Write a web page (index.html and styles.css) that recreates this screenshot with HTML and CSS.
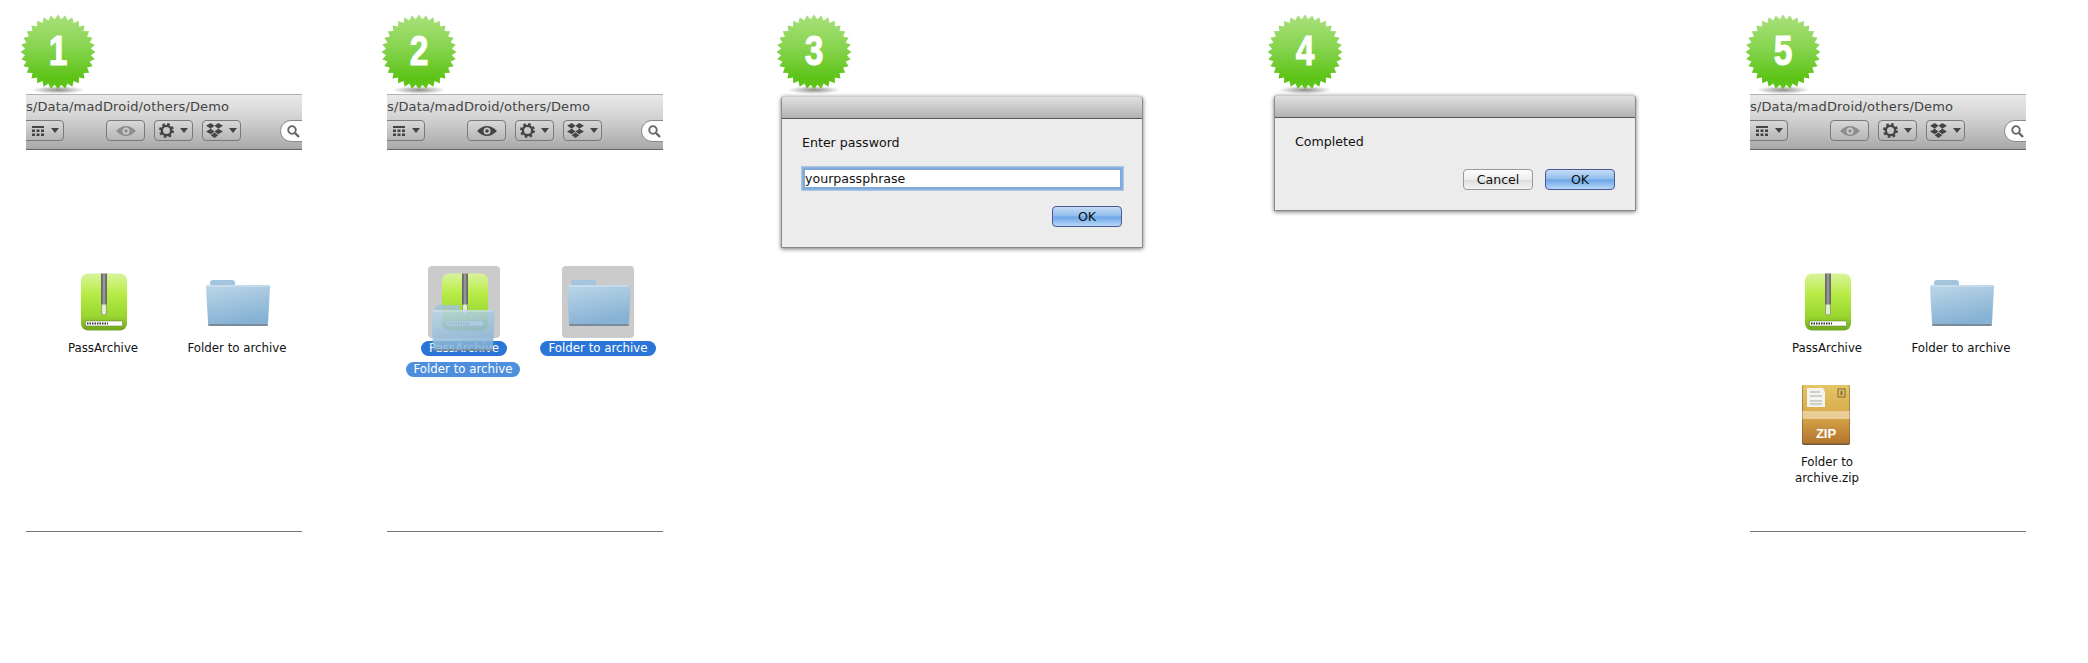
FILE: index.html
```html
<!DOCTYPE html>
<html>
<head>
<meta charset="utf-8"/>
    <title>PassArchive steps</title>
    <link rel="stylesheet" href="styles.css">
</head>
<body>
    <!-- shared icons -->
    <svg class="sprite" xmlns="http://www.w3.org/2000/svg">
        <defs>
            <linearGradient id="badgeFill" gradientUnits="userSpaceOnUse" x1="0" y1="0" x2="0" y2="76">
                <stop offset="0" stop-color="#a9e07c"/>
                <stop offset="0.45" stop-color="#86d44e"/>
                <stop offset="0.85" stop-color="#5cc315"/>
                <stop offset="1" stop-color="#62c51d"/>
            </linearGradient>
            <radialGradient id="badgeShadow">
                <stop offset="0" stop-color="#000" stop-opacity="0.45"/>
                <stop offset="1" stop-color="#000" stop-opacity="0"/>
            </radialGradient>
            <clipPath id="starClip">
                <circle cx="38" cy="38" r="33"/>
                <path d="M38 0.500L64 38L38 75.500L12 38z"/>
                <path d="M38 0.500L64 38L38 75.500L12 38z" transform="rotate(11.25 38 38)"/>
                <path d="M38 0.500L64 38L38 75.500L12 38z" transform="rotate(22.5 38 38)"/>
                <path d="M38 0.500L64 38L38 75.500L12 38z" transform="rotate(33.75 38 38)"/>
                <path d="M38 0.500L64 38L38 75.500L12 38z" transform="rotate(45 38 38)"/>
                <path d="M38 0.500L64 38L38 75.500L12 38z" transform="rotate(56.25 38 38)"/>
                <path d="M38 0.500L64 38L38 75.500L12 38z" transform="rotate(67.5 38 38)"/>
                <path d="M38 0.500L64 38L38 75.500L12 38z" transform="rotate(78.75 38 38)"/>
                <path d="M38 0.500L64 38L38 75.500L12 38z" transform="rotate(90 38 38)"/>
                <path d="M38 0.500L64 38L38 75.500L12 38z" transform="rotate(101.25 38 38)"/>
                <path d="M38 0.500L64 38L38 75.500L12 38z" transform="rotate(112.5 38 38)"/>
                <path d="M38 0.500L64 38L38 75.500L12 38z" transform="rotate(123.75 38 38)"/>
                <path d="M38 0.500L64 38L38 75.500L12 38z" transform="rotate(135 38 38)"/>
                <path d="M38 0.500L64 38L38 75.500L12 38z" transform="rotate(146.25 38 38)"/>
                <path d="M38 0.500L64 38L38 75.500L12 38z" transform="rotate(157.5 38 38)"/>
                <path d="M38 0.500L64 38L38 75.500L12 38z" transform="rotate(168.75 38 38)"/>
            </clipPath>
            <linearGradient id="zipGreen" x1="0" y1="0" x2="0" y2="1">
                <stop offset="0" stop-color="#d9f39b"/>
                <stop offset="0.35" stop-color="#b8ec47"/>
                <stop offset="0.75" stop-color="#9ad62f"/>
                <stop offset="1" stop-color="#6ea51f"/>
            </linearGradient>
            <linearGradient id="folderBody" x1="0" y1="0" x2="0.3" y2="1">
                <stop offset="0" stop-color="#bdd6e8"/>
                <stop offset="1" stop-color="#86b2d4"/>
            </linearGradient>
            <linearGradient id="boxFill" x1="0" y1="0" x2="0" y2="1">
                <stop offset="0" stop-color="#e4c666"/>
                <stop offset="0.5" stop-color="#d9a94a"/>
                <stop offset="1" stop-color="#b4752f"/>
            </linearGradient>
            <symbol id="badge" viewBox="0 0 76 82">
                <ellipse cx="38" cy="76" rx="27" ry="4" fill="url(#badgeShadow)"/>
                <rect x="0" y="0" width="76" height="76" fill="url(#badgeFill)" clip-path="url(#starClip)"/>
            </symbol>
            <symbol id="zipApp" viewBox="0 0 46 58">
                <rect x="0" y="0.500" width="46" height="57" rx="7" fill="url(#zipGreen)"/>
                <rect x="20" y="0.500" width="6" height="31" fill="#6a6a6e"/>
                <path d="M23 0.500V31" stroke="#c2c2c2" stroke-width="2.500" stroke-dasharray="1 1"/>
                <rect x="20.500" y="31" width="5" height="11" rx="2" fill="#e2ecd4" stroke="#7d8a6c" stroke-width="0.7"/>
                <rect x="4.500" y="48" width="37" height="5" fill="#fff" stroke="#5d7a2d" stroke-width="0.5"/>
                <path d="M6 50.500H27" stroke="#333" stroke-width="2" stroke-dasharray="1.500 1"/>
            </symbol>
            <symbol id="folder" viewBox="0 0 64 50">
                <path d="M4 6q0-3 3-3h19q3 0 3 3v2h30q3 0 3 3v4H4z" fill="#a2c4dc"/>
                <path d="M0 10q0-2 2-2h60q2 0 2 2l-2 36q0 2-2 2H4q-2 0-2-2z" fill="url(#folderBody)"/>
                <path d="M2 9h60" stroke="#d6e6f1" stroke-width="1"/>
                <path d="M2 47h60v1q0 1-2 1H4q-2 0-2-1z" fill="#7c8b97"/>
            </symbol>
            <symbol id="zipBox" viewBox="0 0 48 60">
                <rect x="0" y="0" width="48" height="60" rx="2" fill="#6b5a3a"/>
                <rect x="0.500" y="0" width="47" height="58.500" rx="2" fill="url(#boxFill)"/>
                <path d="M5 3h16l2 4v15H5z" fill="#f4f3ee"/>
                <path d="M8 7h10M8 11h12M8 16h12M8 19h12" stroke="#aaa" stroke-width="1"/>
                <rect x="36" y="4" width="7" height="8" fill="none" stroke="#7d6a3a"/>
                <rect x="38.500" y="6" width="2" height="4" fill="#7d6a3a"/>
                <rect x="0.500" y="26" width="47" height="8" fill="#f0d9b0" opacity="0.75"/>
                <text x="24" y="53" text-anchor="middle" class="zip-text">ZIP</text>
            </symbol>
            <symbol id="eye" viewBox="0 0 20 12">
                <path d="M0 6Q10-4 20 6Q10 16 0 6z" fill="currentColor"/>
                <circle cx="10" cy="6" r="3.500" fill="#ccc"/>
                <circle cx="10" cy="6" r="1.800" fill="currentColor"/>
            </symbol>
            <symbol id="gear" viewBox="0 0 16 16">
                <circle cx="8" cy="8" r="5" fill="none" stroke="#444" stroke-width="2.500"/>
                <circle cx="8" cy="8" r="6.500" fill="none" stroke="#444" stroke-width="3" stroke-dasharray="2.550 2.550"/>
            </symbol>
            <symbol id="dropbox" viewBox="0 0 18 16">
                <path d="M5 0l4 3-4 3-5-3zM13 0l5 3-5 3-4-3zM5 6l4 3-4 3-5-3zM13 6l5 3-5 3-4-3zM9 10l4 3-4 3-4-3z" fill="#444"/>
            </symbol>
            <symbol id="viewGrid" viewBox="0 0 12 10">
                <path d="M0 0h12v2H0zM0 3.500h3v2.500H0zM4.500 3.500h3v2.500h-3zM9 3.500h3v2.500H9zM0 7.500h3V10H0zM4.500 7.500h3V10h-3zM9 7.500h3V10H9z" fill="#444"/>
            </symbol>
            <symbol id="lens" viewBox="0 0 13 13">
                <circle cx="5" cy="5" r="3.800" fill="none" stroke="#666" stroke-width="1.800"/>
                <path d="M8 8l4 4" stroke="#666" stroke-width="2.400"/>
            </symbol>
        </defs>
    </svg>

    <div class="steps">
        <section class="step step-1">
            <div class="badge"><svg class="badge-star"><use href="#badge"/></svg><span class="digit">1</span></div>
            <div class="finder">
                <div class="toolbar">
                    <div class="path">s/Data/madDroid/others/Demo</div>
                    <div class="tools">
                        <div class="tool tool-view"><svg class="ico-grid"><use href="#viewGrid"/></svg><i class="caret"></i></div>
                        <div class="tool tool-eye eye-off"><svg class="ico-eye"><use href="#eye"/></svg></div>
                        <div class="tool"><svg class="ico-gear"><use href="#gear"/></svg><i class="caret"></i></div>
                        <div class="tool"><svg class="ico-drop"><use href="#dropbox"/></svg><i class="caret"></i></div>
                        <div class="search"><svg class="ico-lens"><use href="#lens"/></svg></div>
                    </div>
                </div>
                <div class="files">
                    <div class="file"><div class="thumb"><svg class="ico-zip"><use href="#zipApp"/></svg></div><div class="name"><span>PassArchive</span></div></div>
                    <div class="file"><div class="thumb"><svg class="ico-folder"><use href="#folder"/></svg></div><div class="name"><span>Folder to archive</span></div></div>
                </div>
            </div>
        </section>

        <section class="step step-2">
            <div class="badge"><svg class="badge-star"><use href="#badge"/></svg><span class="digit">2</span></div>
            <div class="finder">
                <div class="toolbar">
                    <div class="path">s/Data/madDroid/others/Demo</div>
                    <div class="tools">
                        <div class="tool tool-view"><svg class="ico-grid"><use href="#viewGrid"/></svg><i class="caret"></i></div>
                        <div class="tool tool-eye"><svg class="ico-eye"><use href="#eye"/></svg></div>
                        <div class="tool"><svg class="ico-gear"><use href="#gear"/></svg><i class="caret"></i></div>
                        <div class="tool"><svg class="ico-drop"><use href="#dropbox"/></svg><i class="caret"></i></div>
                        <div class="search"><svg class="ico-lens"><use href="#lens"/></svg></div>
                    </div>
                </div>
                <div class="files">
                    <div class="file selected"><div class="thumb"><svg class="ico-zip"><use href="#zipApp"/></svg></div><div class="name"><span>PassArchive</span></div></div>
                    <div class="file selected"><div class="thumb"><svg class="ico-folder"><use href="#folder"/></svg></div><div class="name"><span>Folder to archive</span></div></div>
                    <!-- item being dragged, sits over the first file -->
                    <div class="ghost">
                        <svg class="ico-folder"><use href="#folder"/></svg>
                        <div class="ghost-name">Folder to archive</div>
                    </div>
                </div>
            </div>
        </section>

        <section class="step step-3">
            <div class="badge"><svg class="badge-star"><use href="#badge"/></svg><span class="digit">3</span></div>
            <div class="dialog">
                <div class="dialog-title"></div>
                <div class="dialog-body">
                    <label class="dialog-label" for="pass">Enter password</label>
                    <input class="dialog-input" type="text" id="pass" value="yourpassphrase">
                    <div class="dialog-buttons">
                        <button type="button" class="btn btn-ok">OK</button>
                    </div>
                </div>
            </div>
        </section>

        <section class="step step-4">
            <div class="badge"><svg class="badge-star"><use href="#badge"/></svg><span class="digit">4</span></div>
            <div class="dialog">
                <div class="dialog-title"></div>
                <div class="dialog-body">
                    <div class="dialog-label">Completed</div>
                    <div class="dialog-buttons">
                        <button type="button" class="btn">Cancel</button>
                        <button type="button" class="btn btn-ok">OK</button>
                    </div>
                </div>
            </div>
        </section>

        <section class="step step-5">
            <div class="badge"><svg class="badge-star"><use href="#badge"/></svg><span class="digit">5</span></div>
            <div class="finder">
                <div class="toolbar">
                    <div class="path">s/Data/madDroid/others/Demo</div>
                    <div class="tools">
                        <div class="tool tool-view"><svg class="ico-grid"><use href="#viewGrid"/></svg><i class="caret"></i></div>
                        <div class="tool tool-eye eye-off"><svg class="ico-eye"><use href="#eye"/></svg></div>
                        <div class="tool"><svg class="ico-gear"><use href="#gear"/></svg><i class="caret"></i></div>
                        <div class="tool"><svg class="ico-drop"><use href="#dropbox"/></svg><i class="caret"></i></div>
                        <div class="search"><svg class="ico-lens"><use href="#lens"/></svg></div>
                    </div>
                </div>
                <div class="files">
                    <div class="file"><div class="thumb"><svg class="ico-zip"><use href="#zipApp"/></svg></div><div class="name"><span>PassArchive</span></div></div>
                    <div class="file"><div class="thumb"><svg class="ico-folder"><use href="#folder"/></svg></div><div class="name"><span>Folder to archive</span></div></div>
                    <div class="file"><div class="thumb"><svg class="ico-box"><use href="#zipBox"/></svg></div><div class="name name-wrap"><span>Folder to archive.zip</span></div></div>
                </div>
            </div>
        </section>
    </div>
</body>
</html>
```

FILE: styles.css
```css
body {
    font-family: "DejaVu Sans", "Open Sans", sans-serif;
    background-color: #fff;
    color: #111;
    margin: 0;
}
.sprite {
    position: absolute;
    width: 0;
    height: 0;
}
.steps {
    display: grid;
    grid-template-columns: 361px 395px 491px 477px 1fr;
    padding: 14px 0 0 20px;
}
.step-3 .dialog {
    margin: 7px 0 0 5px;
}
.step-4 .dialog {
    margin: 6px 0 0 7px;
}
.step-5 .badge {
    margin-left: 1px;
}

/* green step badge */
.badge {
    position: relative;
    width: 76px;
    height: 75px;
}
.badge-star {
    display: block;
    width: 76px;
    height: 82px;
}
.digit {
    position: absolute;
    top: 13px;
    left: 0;
    width: 76px;
    text-align: center;
    font-family: "Liberation Sans", Arial, sans-serif;
    font-weight: bold;
    font-size: 42px;
    line-height: 48px;
    color: #fff;
    transform: scaleX(0.8);
    -webkit-text-stroke: 1px #fff;
}

/* finder window */
.finder {
    width: 276px;
    margin: 5px 0 0 6px;
    border-bottom: 1px solid #777;
    overflow: hidden;
}
.toolbar {
    height: 54px;
    border-top: 1px solid #b0b0b0;
    border-bottom: 1px solid #666;
    background: linear-gradient(#e9e9e9, #d4d4d4 40%, #a9a9a9);
    overflow: hidden;
}
.path {
    height: 25px;
    font-size: 13px;
    line-height: 24px;
    letter-spacing: 0.15px;
    color: #444;
    white-space: nowrap;
}
.tools {
    display: flex;
    gap: 9px;
}
.tool {
    flex: none;
    display: flex;
    align-items: center;
    justify-content: center;
    gap: 6px;
    width: 37px;
    height: 19px;
    border: 1px solid #7a7a7a;
    border-radius: 4px;
    background: linear-gradient(#d8d8d8, #b6b6b6);
}
.tool-view {
    width: 36px;
    gap: 7px;
    margin-left: -10px;
    margin-right: 33px;
    padding-left: 10px;
}
.caret {
    width: 0;
    height: 0;
    border-left: 4px solid transparent;
    border-right: 4px solid transparent;
    border-top: 5px solid #444;
}
.ico-grid {
    width: 12px;
    height: 10px;
}
.ico-eye {
    width: 20px;
    height: 12px;
    color: #444;
}
.eye-off .ico-eye {
    color: #8d8d8d;
}
.ico-gear {
    width: 15px;
    height: 15px;
}
.ico-drop {
    width: 17px;
    height: 15px;
}
.search {
    flex: none;
    display: flex;
    align-items: center;
    width: 40px;
    height: 20px;
    margin-left: 30px;
    padding-left: 6px;
    border: 1px solid #8a8a8a;
    border-radius: 11px;
    background-color: #fff;
}
.ico-lens {
    width: 13px;
    height: 13px;
}

/* file icons */
.files {
    position: relative;
    display: grid;
    grid-template-columns: 134px 134px;
    row-gap: 23px;
    align-content: start;
    height: 381px;
    padding: 116px 0 0 10px;
    box-sizing: border-box;
    font-size: 11.8px;
    line-height: 15px;
}
.file {
    display: flex;
    flex-direction: column;
    align-items: center;
}
.thumb {
    display: flex;
    align-items: center;
    justify-content: center;
    width: 72px;
    height: 72px;
    border-radius: 4px;
}
.ico-zip {
    width: 46px;
    height: 58px;
    margin-left: 2px;
}
.ico-folder {
    width: 64px;
    height: 50px;
    margin-left: 2px;
}
.ico-box {
    width: 48px;
    height: 60px;
    margin-right: 2px;
}
.zip-text {
    font-family: "Liberation Sans", Arial, sans-serif;
    font-weight: bold;
    font-size: 13px;
    fill: #fff;
}
.name {
    margin-top: 3px;
    text-align: center;
    white-space: nowrap;
}
.name span {
    display: inline-block;
    padding: 0 8px;
    border-radius: 8px;
}
.name-wrap {
    width: 92px;
    white-space: normal;
    line-height: 16px;
}
.name-wrap span {
    padding: 0;
}
.selected .thumb {
    background-color: #cbcbcb;
}
.selected .name span {
    background-color: #2a75d8;
    color: #fff;
}

/* drag ghost over the first file */
.ghost {
    position: absolute;
    left: 19px;
    top: 152px;
    width: 114px;
    text-align: center;
}
.ghost .ico-folder {
    display: block;
    margin: 0 auto;
    opacity: 0.85;
}
.ghost-name {
    margin-top: 10px;
    border-radius: 8px;
    color: #fff;
    background-color: #4d8fdc;
}

/* dialogs */
.dialog {
    width: 362px;
    box-sizing: border-box;
    border: 1px solid #8a8a8a;
    border-top-color: #ccc;
    border-radius: 4px 4px 0 0;
    background-color: #ececec;
    box-shadow: 0 1px 4px rgba(0, 0, 0, 0.55);
    font-size: 12.6px;
}
.dialog-title {
    height: 21px;
    border-bottom: 1px solid #555;
    background: linear-gradient(#e0e0e0, #b2b2b2);
    border-radius: 3px 3px 0 0;
}
.dialog-body {
    padding: 16px 20px 20px;
}
.dialog-label {
    display: block;
    line-height: 16px;
}
.dialog-input {
    display: block;
    width: 321px;
    height: 23px;
    box-sizing: border-box;
    margin: 16px 0 16px;
    padding: 0 2px;
    border: 1px solid #8fb3dc;
    outline: 2px solid #7fa9d8;
    outline-offset: -3px;
    box-shadow: 0 0 0 1px #a9c6e6;
    font-family: inherit;
    font-size: 12.6px;
    color: #111;
}
.dialog-buttons {
    display: flex;
    justify-content: flex-end;
    gap: 12px;
}
.step-4 .dialog-buttons {
    margin-top: 19px;
}
.btn {
    width: 70px;
    height: 21px;
    padding: 0;
    border: 1px solid #999;
    border-radius: 4px;
    background: linear-gradient(#fdfdfd, #ededed 50%, #dcdcdc 51%, #f4f4f4);
    font-family: inherit;
    font-size: 12.6px;
    color: #111;
}
.btn-ok {
    border-color: #4a5a96;
    background: linear-gradient(#c6dcf6, #8fbcec 48%, #6aa5e8 52%, #b8d8f6);
}
```
